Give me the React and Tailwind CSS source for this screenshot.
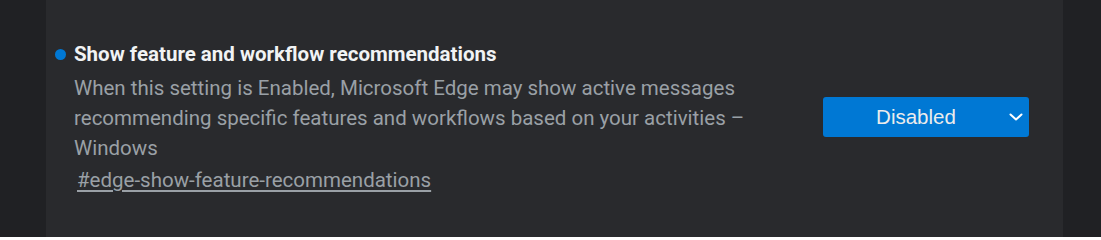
import React from 'react';

const ChevronDown = () => (
  <svg width="14" height="8" viewBox="0 0 14 8" fill="none" className="absolute right-[6px] top-[16px]">
    <path d="M1.5 1.5 L7 6.5 L12.5 1.5" stroke="#ffffff" strokeWidth="2" strokeLinecap="round" strokeLinejoin="round" />
  </svg>
);

const App = () => {
  return (
    <div className="w-full h-[237px] flex bg-[#202124] overflow-hidden">
      {/* side gutters */}
      <div className="w-[46px] shrink-0 bg-[#202124]" />

      {/* experiment row */}
      <div className="flex-1 bg-[#292a2d] flex justify-between pl-[9px] pr-[34px] pt-[42px]">
        <div className="flex items-start">
          <span className="w-[11px] h-[11px] mt-[7px] rounded-full bg-[#0078d4] shrink-0" />
          <div className="ml-[8px] w-[690px] font-['Roboto',sans-serif]">
            <h2 className="text-[20.5px] leading-[24px] font-bold text-[#f1f3f4]">
              Show feature and workflow recommendations
            </h2>
            <p className="mt-[7px] text-[20.5px] leading-[30px] text-[#9aa0a6]">
              When this setting is Enabled, Microsoft Edge may show active messages recommending specific features and workflows based on your activities – Windows
            </p>
            <a
              href="#edge-show-feature-recommendations"
              className="block mt-[2px] ml-[3px] text-[20.5px] leading-[30px] text-[#9aa0a6] underline underline-offset-[3px]"
            >
              #edge-show-feature-recommendations
            </a>
          </div>
        </div>

        <div className="mt-[55px]">
          <button className="relative w-[206px] h-[40px] rounded-[3px] bg-[#0078d4] pr-[20px] text-[20.5px] text-[#ececec] font-['Liberation_Sans',Arial,sans-serif]">
            Disabled
            <ChevronDown />
          </button>
        </div>
      </div>

      <div className="w-[38px] shrink-0 bg-[#202124]" />
    </div>
  );
};

export default App;
